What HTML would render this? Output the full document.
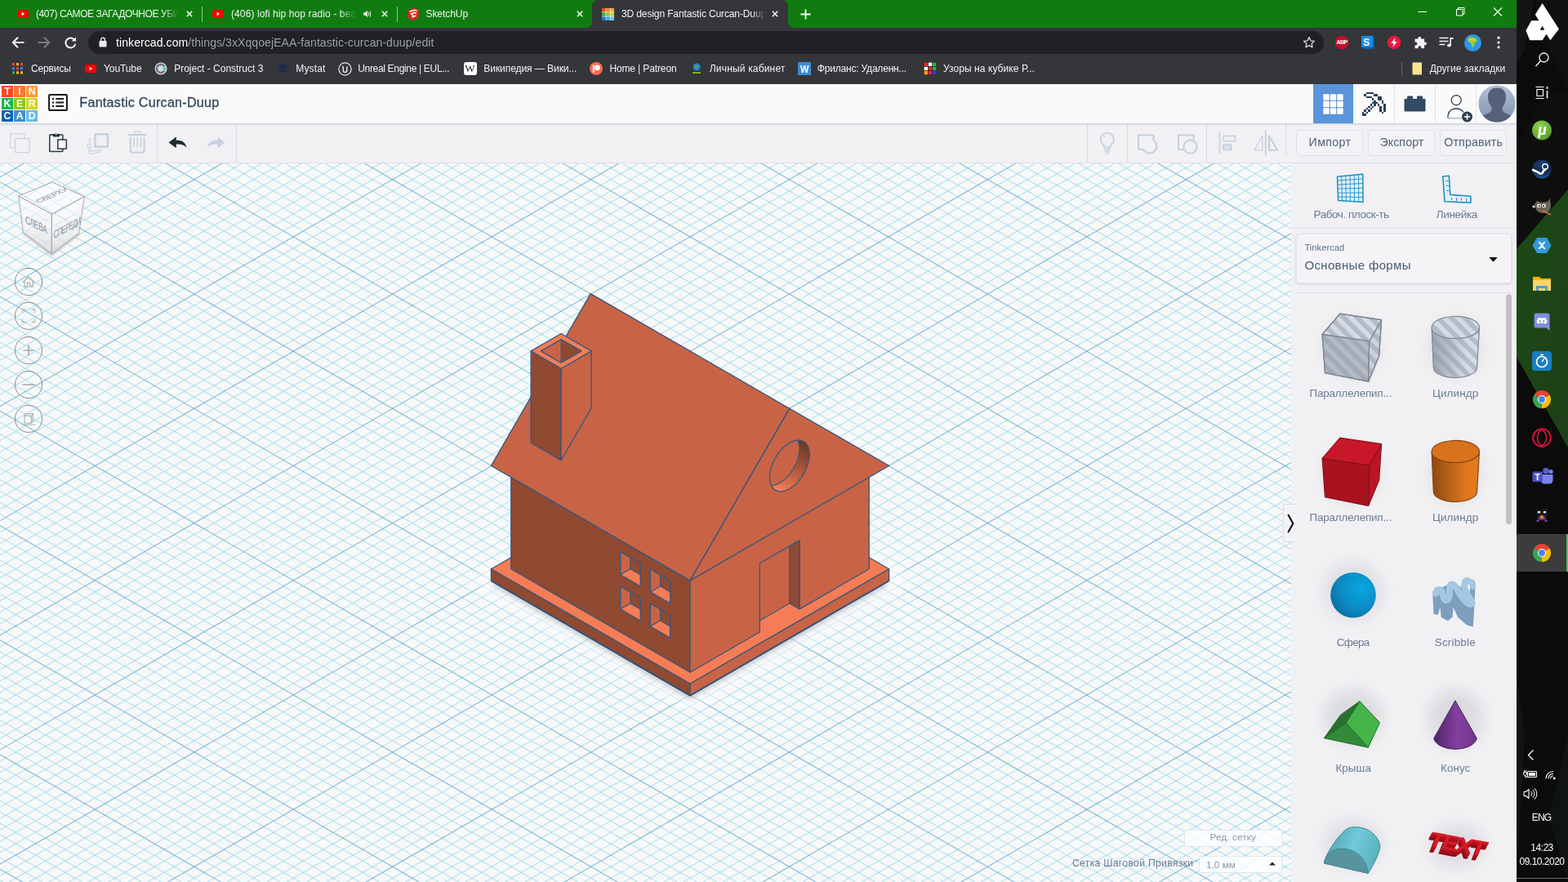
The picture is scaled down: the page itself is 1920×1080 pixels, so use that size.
<!DOCTYPE html>
<html lang="ru">
<head>
<meta charset="utf-8">
<title>3D design Fantastic Curcan-Duup | Tinkercad</title>
<style>
*{box-sizing:border-box;margin:0;padding:0}
html,body{width:1920px;height:1080px;overflow:hidden;background:#0b0b0b}
body{font-family:"Liberation Sans",sans-serif;-webkit-font-smoothing:antialiased}
#screen{position:relative;width:1920px;height:1080px;overflow:hidden}
.t{position:absolute;white-space:nowrap;line-height:0}
#browser,#workspace,#taskbar{will-change:transform}
.abs{position:absolute}
svg{position:absolute;display:block;overflow:visible}
#workspace{position:absolute;left:0;top:103px;width:1857px;height:977px;background:#f0f0f3;overflow:hidden}
#canvas{position:absolute;left:0;top:97px;width:1581px;height:880px;overflow:hidden;background:#f8f8f8}
#canvas svg.cv{left:0;top:0}

</style>
</head>
<body>
<div id="screen">
<header id="browser" class="abs" style="left:0;top:0;width:1857px;height:103px;background:#35363a;overflow:hidden">
<div class="abs" style="left:0;top:0;width:1857px;height:34px;background:#107c10"></div>
<svg class="abs" style="left:717px;top:0" width="256" height="34" viewBox="0 0 256 34"><path d="M0 34 C5 34 8 31 8 26 V8 C8 3.5 11.5 0 16 0 H240 C244.5 0 248 3.5 248 8 V26 C248 31 251 34 256 34 Z" fill="#35363a"/></svg>
<svg class="abs" style="left:21px;top:12px" width="14" height="10" viewBox="0 0 14 10"><rect width="14" height="10" rx="2.6" fill="#ff0000"/><path d="M5.6 2.8L9.2 5 5.6 7.2z" fill="#fff"/></svg>
<span class="t" style="left:44.00px;top:17.14px;font-size:12.00px;color:#f1f3f4;letter-spacing:-0.401px;width:175px;overflow:hidden;height:20px;line-height:0;-webkit-mask-image:linear-gradient(90deg,#000 155px,transparent 175px);padding-top:10px;margin-top:-10px;">(407) САМОЕ ЗАГАДОЧНОЕ УБИ</span>
<svg class="abs" style="left:228px;top:13px" width="8" height="8" viewBox="0 0 10 10"><path d="M1 1L9 9M9 1L1 9" stroke="#f1f3f4" stroke-width="2" fill="none"/></svg>
<div class="abs" style="left:247px;top:8px;width:1px;height:19px;background:#8fc48f"></div>
<svg class="abs" style="left:260px;top:12px" width="14" height="10" viewBox="0 0 14 10"><rect width="14" height="10" rx="2.6" fill="#ff0000"/><path d="M5.6 2.8L9.2 5 5.6 7.2z" fill="#fff"/></svg>
<span class="t" style="left:283.00px;top:17.14px;font-size:12.00px;color:#f1f3f4;letter-spacing:0.097px;width:153px;overflow:hidden;height:20px;-webkit-mask-image:linear-gradient(90deg,#000 133px,transparent 153px);padding-top:10px;margin-top:-10px;">(406) lofi hip hop radio - bea</span>
<svg class="abs" style="left:444px;top:11px" width="12" height="12" viewBox="0 0 12 12"><path d="M1 4.3h2.2L6 1.8v8.4L3.2 7.7H1z" fill="#dfe6df"/><path d="M7.6 3.6v4.8M9.4 2.4v7.2" stroke="#dfe6df" stroke-width="1" fill="none"/></svg>
<svg class="abs" style="left:466.7px;top:13px" width="8" height="8" viewBox="0 0 10 10"><path d="M1 1L9 9M9 1L1 9" stroke="#f1f3f4" stroke-width="2" fill="none"/></svg>
<div class="abs" style="left:486px;top:8px;width:1px;height:19px;background:#8fc48f"></div>
<svg class="abs" style="left:498px;top:9px" width="16" height="17" viewBox="0 0 16 17"><path d="M1.5 3.5L9.5 0.8 15 3.2 14.2 12.5 7 16.2 2 13z" fill="#e2231a"/><path d="M3.5 5.2L9.6 3.4 12.6 4.6M4.5 8.2L9.8 6.6 12 7.6M7 8.5L7.4 11.6 11.5 10" stroke="#fff" stroke-width="1.5" fill="none"/></svg>
<span class="t" style="left:521.50px;top:17.14px;font-size:12.00px;color:#f1f3f4;letter-spacing:-0.066px;">SketchUp</span>
<svg class="abs" style="left:706px;top:13px" width="8" height="8" viewBox="0 0 10 10"><path d="M1 1L9 9M9 1L1 9" stroke="#f1f3f4" stroke-width="2" fill="none"/></svg>
<svg class="abs" style="left:737px;top:9.5px" width="15" height="15" viewBox="0 0 15 15"><rect width="15" height="15" fill="#fff"/><rect x="0" y="0" width="4.6" height="4.6" fill="#f04e23"/><rect x="5.2" y="0" width="4.6" height="4.6" fill="#f7822f"/><rect x="10.4" y="0" width="4.6" height="4.6" fill="#f9a13a"/><rect x="0" y="5.2" width="4.6" height="4.6" fill="#3fae49"/><rect x="5.2" y="5.2" width="4.6" height="4.6" fill="#8cc63f"/><rect x="10.4" y="5.2" width="4.6" height="4.6" fill="#c4cf3a"/><rect x="0" y="10.4" width="4.6" height="4.6" fill="#1b75bc"/><rect x="5.2" y="10.4" width="4.6" height="4.6" fill="#3ea3dc"/><rect x="10.4" y="10.4" width="4.6" height="4.6" fill="#6ebfe8"/></svg>
<span class="t" style="left:761.00px;top:17.14px;font-size:12.00px;color:#f1f3f4;letter-spacing:-0.121px;width:176px;overflow:hidden;height:20px;-webkit-mask-image:linear-gradient(90deg,#000 160px,transparent 176px);padding-top:10px;margin-top:-10px;">3D design Fantastic Curcan-Duup</span>
<svg class="abs" style="left:944.7px;top:13px" width="8" height="8" viewBox="0 0 10 10"><path d="M1 1L9 9M9 1L1 9" stroke="#f1f3f4" stroke-width="2" fill="none"/></svg>
<svg class="abs" style="left:980px;top:10.5px" width="13" height="13" viewBox="0 0 13 13"><path d="M6.5 0.5v12M0.5 6.5h12" stroke="#fff" stroke-width="1.8" fill="none"/></svg>
<svg class="abs" style="left:1736px;top:8px" width="105" height="13" viewBox="0 0 105 13"><path d="M0.5 6.5H11" stroke="#fff" stroke-width="1" fill="none"/><path d="M47.5 3.5h7.5v7.5h-7.5z M49.5 3.5v-2h7.5v7.5h-2" stroke="#fff" stroke-width="1" fill="none"/><path d="M93 1.5L103 11.5M103 1.5L93 11.5" stroke="#fff" stroke-width="1.1" fill="none"/></svg>
<svg class="abs" style="left:14px;top:44px" width="82" height="16" viewBox="0 0 82 16"><path d="M15.5 8H2M8 1.8L1.8 8 8 14.2" stroke="#f1f3f4" stroke-width="2" fill="none"/><path d="M32.5 8H46M40 1.8L46.2 8 40 14.2" stroke="#7b7d82" stroke-width="2" fill="none"/><path d="M77.5 5.2A6 6 0 1 0 78.3 9.6" stroke="#f1f3f4" stroke-width="2" fill="none"/><path d="M79 1.2v5.3h-5.3z" fill="#f1f3f4"/></svg>
<div class="abs" style="left:108px;top:38px;width:1513px;height:28px;border-radius:14px;background:#202124"></div>
<svg class="abs" style="left:121px;top:45px" width="10" height="13" viewBox="0 0 10 13"><rect x="0.5" y="5" width="9" height="7.5" rx="1" fill="#e8eaed"/><path d="M2.6 5.2V3.6a2.4 2.4 0 0 1 4.8 0v1.6" stroke="#e8eaed" stroke-width="1.4" fill="none"/></svg>
<span class="t" style="left:142px;top:51.95px;font-size:14px;letter-spacing:0.086px;color:#fff">tinkercad.com<span style="color:#9aa0a6">/things/3xXqqoejEAA-fantastic-curcan-duup/edit</span></span>
<svg class="abs" style="left:1594.5px;top:44px" width="16" height="16" viewBox="0 0 16 16"><path d="M8 1.6l1.95 4.2 4.55.5-3.4 3.1.95 4.5L8 11.6l-4.05 2.3.95-4.5-3.4-3.1 4.55-.5z" stroke="#d5d7da" stroke-width="1.3" fill="none" stroke-linejoin="round"/></svg>
<svg class="abs" style="left:1634px;top:43px" width="18" height="18" viewBox="0 0 18 18"><path d="M5.6 1h6.8L17 5.6v6.8L12.4 17H5.6L1 12.4V5.6z" fill="#c70d2c"/></svg>
<span class="t" style="left:1636.25px;top:52.40px;font-size:7.50px;color:#fff;letter-spacing:-0.779px;font-weight:bold;">ABP</span>
<svg class="abs" style="left:1666px;top:43px" width="18" height="18" viewBox="0 0 18 18"><path d="M1 1h14l2 2.5V17H3.5L1 14.5z" fill="#0b5cad"/><rect x="1" y="1" width="14" height="13.5" fill="#1a8fe3"/></svg>
<span class="t" style="left:1669.30px;top:51.84px;font-size:12.00px;color:#fff;font-weight:bold;">S</span>
<svg class="abs" style="left:1698px;top:43px" width="18" height="18" viewBox="0 0 18 18"><circle cx="9" cy="9" r="8.3" fill="#e8173d"/><path d="M10.6 3.2L5.2 9.8h3.2L7.2 14.8l5.6-6.8H9.5z" fill="#fff"/></svg>
<svg class="abs" style="left:1730px;top:43.5px" width="17" height="17" viewBox="0 0 17 17"><path d="M6.5 2.6a1.8 1.8 0 0 1 3.6 0V3.6h3.2a.8.8 0 0 1 .8.8v3h1a1.9 1.9 0 0 1 0 3.8h-1v3.2a.8.8 0 0 1-.8.8h-3v-1a1.9 1.9 0 0 0-3.8 0v1h-3.2a.8.8 0 0 1-.8-.8v-3h1a1.9 1.9 0 0 0 0-3.8h-1V4.4a.8.8 0 0 1 .8-.8h3.2z" fill="#f1f3f4"/></svg>
<svg class="abs" style="left:1762px;top:44px" width="18" height="16" viewBox="0 0 18 16"><path d="M0.5 2.5h11M0.5 6.5h11M0.5 10.5h7" stroke="#f1f3f4" stroke-width="1.7" fill="none"/><path d="M14.2 2v9.2" stroke="#f1f3f4" stroke-width="1.6"/><ellipse cx="12.4" cy="11.6" rx="2.4" ry="2" fill="#f1f3f4"/><path d="M14.2 2h3.3v2h-3.3z" fill="#f1f3f4"/></svg>
<svg class="abs" style="left:1792.5px;top:41.5px" width="21" height="21" viewBox="0 0 21 21"><circle cx="10.5" cy="10.5" r="10.5" fill="#2b96e8"/><path d="M5 4.5c2-1 5-1.5 7.5-.5 2 1 3.500 2 3.500 4.500-1 1-2 1.500-3 1-.500 2-.5 4-2 6-1.500 1-2.500-1.500-2.500-3.500 0-1.500-1.500-2-3-2.500C3.500 8 4 6 5 4.500z" fill="#9ccc3c"/><path d="M6 6.500c2-.5 5 0 7 1" stroke="#f2d33c" stroke-width="1.300" fill="none"/></svg>
<svg class="abs" style="left:1833px;top:44px" width="4" height="16" viewBox="0 0 4 16"><circle cx="2" cy="2.2" r="1.600" fill="#f1f3f4"/><circle cx="2" cy="8" r="1.600" fill="#f1f3f4"/><circle cx="2" cy="13.800" r="1.600" fill="#f1f3f4"/></svg>
<svg class="abs" style="left:15px;top:77px" width="13" height="14" viewBox="0 0 13 14"><rect x="0" y="0" width="3" height="3.300" fill="#e8453c"/><rect x="5" y="0" width="3" height="3.300" fill="#f2b31b"/><rect x="10" y="0" width="3" height="3.300" fill="#e8453c"/><rect x="0" y="5.2" width="3" height="3.300" fill="#3b7ded"/><rect x="5" y="5.2" width="3" height="3.300" fill="#e8453c"/><rect x="10" y="5.2" width="3" height="3.300" fill="#3b7ded"/><rect x="0" y="10.4" width="3" height="3.300" fill="#31a952"/><rect x="5" y="10.4" width="3" height="3.300" fill="#f2b31b"/><rect x="10" y="10.4" width="3" height="3.300" fill="#f2b31b"/></svg>
<span class="t" style="left:38.00px;top:83.84px;font-size:12.00px;color:#f1f3f4;letter-spacing:-0.131px;">Сервисы</span>
<span class="t" style="left:127.00px;top:83.84px;font-size:12.00px;color:#f1f3f4;letter-spacing:-0.094px;">YouTube</span>
<span class="t" style="left:213.20px;top:83.84px;font-size:12.00px;color:#f1f3f4;letter-spacing:-0.013px;">Project - Construct 3</span>
<span class="t" style="left:362.30px;top:83.84px;font-size:12.00px;color:#f1f3f4;letter-spacing:0.144px;">Mystat</span>
<span class="t" style="left:438.20px;top:83.84px;font-size:12.00px;color:#f1f3f4;letter-spacing:-0.322px;">Unreal Engine | EUL...</span>
<span class="t" style="left:592.30px;top:83.84px;font-size:12.00px;color:#f1f3f4;letter-spacing:-0.058px;">Википедия — Вики...</span>
<span class="t" style="left:746.40px;top:83.84px;font-size:12.00px;color:#f1f3f4;letter-spacing:-0.123px;">Home | Patreon</span>
<span class="t" style="left:868.80px;top:83.84px;font-size:12.00px;color:#f1f3f4;letter-spacing:0.173px;">Личный кабинет</span>
<span class="t" style="left:1000.80px;top:83.84px;font-size:12.00px;color:#f1f3f4;letter-spacing:-0.188px;">Фриланс: Удаленн...</span>
<span class="t" style="left:1155.00px;top:83.84px;font-size:12.00px;color:#f1f3f4;letter-spacing:0.076px;">Узоры на кубике Р...</span>
<span class="t" style="left:1750.80px;top:83.84px;font-size:12.00px;color:#f1f3f4;letter-spacing:0.037px;">Другие закладки</span>
<svg class="abs" style="left:104px;top:79px" width="14" height="10" viewBox="0 0 14 10"><rect width="14" height="10" rx="2.6" fill="#ff0000"/><path d="M5.6 2.8L9.2 5 5.6 7.2z" fill="#fff"/></svg>
<svg class="abs" style="left:189px;top:76px" width="16" height="16" viewBox="0 0 16 16"><circle cx="8" cy="8" r="7.500" fill="#d9dde2"/><path d="M12.200 5.500A5 5 0 1 0 12.200 10.500" stroke="#6b7783" stroke-width="2.600" fill="none"/><path d="M9.500 8l4.500-2.500v5z" fill="#2fd1b5"/></svg>
<svg class="abs" style="left:338px;top:77px" width="16" height="14" viewBox="0 0 16 14"><path d="M8 1L15.500 4.800 8 8.600 0.500 4.800z" fill="#1f2b4d"/><path d="M3.500 7v3.500c2.500 2 6.500 2 9 0V7L8 9.300z" fill="#1f2b4d"/></svg>
<svg class="abs" style="left:413.500px;top:75.500px" width="17" height="17" viewBox="0 0 17 17"><circle cx="8.500" cy="8.500" r="7.600" stroke="#e8eaed" stroke-width="1.200" fill="none"/><path d="M5.200 5.200c.9.300 1.100.8 1.100 1.600v3.400c0 1.500 1.100 2.300 2.300 2.300s2.200-.8 2.200-2.300V5.600" stroke="#e8eaed" stroke-width="1.500" fill="none"/></svg>
<div class="abs" style="left:568px;top:76px;width:16px;height:16px;border-radius:3px;background:#fff"></div>
<span class="t" style="left:569.2px;top:84.10px;font-size:13px;color:#222;font-family:'Liberation Serif',serif;letter-spacing:-0.500px">W</span>
<svg class="abs" style="left:722px;top:76px" width="16" height="16" viewBox="0 0 16 16"><circle cx="8" cy="8" r="8" fill="#f96854"/><circle cx="9.300" cy="6.800" r="3.400" fill="#fff"/><rect x="3.800" y="3.400" width="1.800" height="9.400" fill="#fff"/></svg>
<svg class="abs" style="left:845px;top:75.500px" width="16" height="17" viewBox="0 0 16 17"><circle cx="8.200" cy="6" r="4.600" fill="#2a7fd0"/><path d="M5 5c1.500-1.500 4-1.500 5.500 0-1 1.500-1 2.500-2.500 3-1.500-.500-2.500-1.500-3-3z" fill="#3cb34a"/><rect x="2" y="11.500" width="12" height="3.600" fill="#1d3f1d"/><rect x="3" y="12.500" width="10" height="1.400" fill="#c9d13a"/></svg>
<div class="abs" style="left:977px;top:76px;width:16px;height:16px;background:#3f8ad0"></div>
<span class="t" style="left:978.87px;top:84.70px;font-size:13.00px;color:#fff;font-weight:bold;transform:scaleX(0.85);">W</span>
<svg class="abs" style="left:1131px;top:76px" width="16" height="16" viewBox="0 0 16 16"><rect width="16" height="16" fill="#222"/><rect x="0.6" y="0.6" width="4.400" height="4.400" fill="#e8272b"/><rect x="5.8" y="0.6" width="4.400" height="4.400" fill="#fff"/><rect x="11" y="0.6" width="4.400" height="4.400" fill="#2fb344"/><rect x="0.6" y="5.8" width="4.400" height="4.400" fill="#fff"/><rect x="5.8" y="5.8" width="4.400" height="4.400" fill="#e8272b"/><rect x="11" y="5.8" width="4.400" height="4.400" fill="#2fb344"/><rect x="0.6" y="11" width="4.400" height="4.400" fill="#f2a516"/><rect x="5.8" y="11" width="4.400" height="4.400" fill="#e8272b"/><rect x="11" y="11" width="4.400" height="4.400" fill="#2340e0"/></svg>
<div class="abs" style="left:1716px;top:76px;width:1px;height:16px;background:#5f6368"></div>
<svg class="abs" style="left:1728.500px;top:76px" width="13" height="16" viewBox="0 0 13 16"><path d="M0.500 1.500a1 1 0 0 1 1-1h9.500a1 1 0 0 1 1 1v13a1 1 0 0 1-1 1H1.500a1 1 0 0 1-1-1z" fill="#fde293"/><path d="M9.500 15.500v-3h3z" fill="#f4c34a"/></svg>
</header>
<main id="workspace">
<div id="tk-header" class="abs" style="left:0;top:0;width:1857px;height:48px;background:#fafafa;box-shadow:0 1px 2px rgba(120,135,160,.42);z-index:3">
<div class="abs" style="left:2.10px;top:2.20px;width:13.7px;height:13.7px;background:#fb4522"></div>
<span class="t" style="left:5.27px;top:9.17px;font-size:12.20px;color:#fff;font-weight:bold;">T</span>
<div class="abs" style="left:17.15px;top:2.20px;width:13.7px;height:13.7px;background:#fd7531"></div>
<span class="t" style="left:22.36px;top:9.17px;font-size:12.20px;color:#fff;font-weight:bold;">I</span>
<div class="abs" style="left:32.20px;top:2.20px;width:13.7px;height:13.7px;background:#fe9a33"></div>
<span class="t" style="left:34.69px;top:9.17px;font-size:12.20px;color:#fff;font-weight:bold;">N</span>
<div class="abs" style="left:2.10px;top:17.25px;width:13.7px;height:13.7px;background:#20b254"></div>
<span class="t" style="left:4.59px;top:24.22px;font-size:12.20px;color:#fff;font-weight:bold;">K</span>
<div class="abs" style="left:17.15px;top:17.25px;width:13.7px;height:13.7px;background:#8ac906"></div>
<span class="t" style="left:19.98px;top:24.22px;font-size:12.20px;color:#fff;font-weight:bold;">E</span>
<div class="abs" style="left:32.20px;top:17.25px;width:13.7px;height:13.7px;background:#d2d228"></div>
<span class="t" style="left:34.69px;top:24.22px;font-size:12.20px;color:#fff;font-weight:bold;">R</span>
<div class="abs" style="left:2.10px;top:32.30px;width:13.7px;height:13.7px;background:#0461b2"></div>
<span class="t" style="left:4.59px;top:39.27px;font-size:12.20px;color:#fff;font-weight:bold;">C</span>
<div class="abs" style="left:17.15px;top:32.30px;width:13.7px;height:13.7px;background:#3d90d0"></div>
<span class="t" style="left:19.64px;top:39.27px;font-size:12.20px;color:#fff;font-weight:bold;">A</span>
<div class="abs" style="left:32.20px;top:32.30px;width:13.7px;height:13.7px;background:#6bb8e1"></div>
<span class="t" style="left:34.69px;top:39.27px;font-size:12.20px;color:#fff;font-weight:bold;">D</span>
<svg class="abs" style="left:59px;top:12px" width="24" height="21" viewBox="0 0 24 21"><rect x="1.1" y="1.1" width="21.8" height="18.8" rx="1" fill="#fff" stroke="#151515" stroke-width="2"/><path d="M4.8 6h2.4M4.8 10.5h2.4M4.8 15h2.4M9.300 6h9.800M9.300 10.500h9.800M9.300 15h9.800" stroke="#1c1c1c" stroke-width="2.200" fill="none"/></svg>
<span class="t" style="left:97.30px;top:22.42px;font-size:16.10px;color:#33465c;letter-spacing:0.274px;-webkit-text-stroke:0.3px #33465c;">Fantastic Curcan-Duup</span>
<div class="abs" style="left:1608px;top:0;width:49px;height:48px;background:#5b94da"></div>
<svg class="abs" style="left:1620px;top:12px" width="25" height="25" viewBox="0 0 25 25"><rect x="0.3" y="0.3" width="7.400" height="7.400" rx="0.800" fill="#fff"/><rect x="8.8" y="0.3" width="7.400" height="7.400" rx="0.800" fill="#fff"/><rect x="17.3" y="0.3" width="7.400" height="7.400" rx="0.800" fill="#fff"/><rect x="0.3" y="8.8" width="7.400" height="7.400" rx="0.800" fill="#fff"/><rect x="8.8" y="8.8" width="7.400" height="7.400" rx="0.800" fill="#fff"/><rect x="17.3" y="8.8" width="7.400" height="7.400" rx="0.800" fill="#fff"/><rect x="0.3" y="17.3" width="7.400" height="7.400" rx="0.800" fill="#fff"/><rect x="8.8" y="17.3" width="7.400" height="7.400" rx="0.800" fill="#fff"/><rect x="17.3" y="17.3" width="7.400" height="7.400" rx="0.800" fill="#fff"/></svg>
<div class="abs" style="left:1707px;top:0;width:1px;height:48px;background:#dfe4ea"></div>
<div class="abs" style="left:1757px;top:0;width:1px;height:48px;background:#dfe4ea"></div>
<div class="abs" style="left:1807px;top:0;width:1px;height:48px;background:#dfe4ea"></div>
<svg class="abs" style="left:1668.300px;top:9.500px" width="30" height="30" viewBox="0 0 30 30" shape-rendering="crispEdges"><rect x="4.75" y="0.00" width="9.50" height="2.38" fill="#2a3f5a"/><rect x="2.38" y="2.38" width="2.38" height="2.38" fill="#2a3f5a"/><rect x="14.25" y="2.38" width="4.75" height="2.38" fill="#2a3f5a"/><rect x="4.75" y="4.75" width="7.12" height="2.38" fill="#2a3f5a"/><rect x="19.00" y="4.75" width="4.75" height="2.38" fill="#2a3f5a"/><rect x="11.88" y="7.12" width="2.38" height="2.38" fill="#2a3f5a"/><rect x="19.00" y="7.12" width="4.75" height="2.38" fill="#2a3f5a"/><rect x="14.25" y="9.50" width="2.38" height="2.38" fill="#2a3f5a"/><rect x="23.75" y="9.50" width="2.38" height="2.38" fill="#2a3f5a"/><rect x="11.88" y="11.88" width="7.12" height="2.38" fill="#2a3f5a"/><rect x="23.75" y="11.88" width="2.38" height="2.38" fill="#2a3f5a"/><rect x="9.50" y="14.25" width="2.38" height="2.38" fill="#2a3f5a"/><rect x="14.25" y="14.25" width="2.38" height="2.38" fill="#2a3f5a"/><rect x="19.00" y="14.25" width="2.38" height="2.38" fill="#2a3f5a"/><rect x="26.12" y="14.25" width="2.38" height="2.38" fill="#2a3f5a"/><rect x="7.12" y="16.62" width="2.38" height="2.38" fill="#2a3f5a"/><rect x="11.88" y="16.62" width="2.38" height="2.38" fill="#2a3f5a"/><rect x="21.38" y="16.62" width="2.38" height="2.38" fill="#2a3f5a"/><rect x="26.12" y="16.62" width="2.38" height="2.38" fill="#2a3f5a"/><rect x="4.75" y="19.00" width="2.38" height="2.38" fill="#2a3f5a"/><rect x="9.50" y="19.00" width="2.38" height="2.38" fill="#2a3f5a"/><rect x="21.38" y="19.00" width="2.38" height="2.38" fill="#2a3f5a"/><rect x="26.12" y="19.00" width="2.38" height="2.38" fill="#2a3f5a"/><rect x="2.38" y="21.38" width="2.38" height="2.38" fill="#2a3f5a"/><rect x="7.12" y="21.38" width="2.38" height="2.38" fill="#2a3f5a"/><rect x="21.38" y="21.38" width="2.38" height="2.38" fill="#2a3f5a"/><rect x="26.12" y="21.38" width="2.38" height="2.38" fill="#2a3f5a"/><rect x="0.00" y="23.75" width="2.38" height="2.38" fill="#2a3f5a"/><rect x="4.75" y="23.75" width="2.38" height="2.38" fill="#2a3f5a"/><rect x="23.75" y="23.75" width="2.38" height="2.38" fill="#2a3f5a"/><rect x="0.00" y="26.12" width="4.75" height="2.38" fill="#2a3f5a"/></svg>
<svg class="abs" style="left:1719px;top:14px" width="27" height="20" viewBox="0 0 27 20"><path d="M0.500 5a1 1 0 0 1 1-1h2.500V1.500a1 1 0 0 1 1-1h5a1 1 0 0 1 1 1V4h5V1.500a1 1 0 0 1 1-1h5a1 1 0 0 1 1 1V4h2.500a1 1 0 0 1 1 1v13.500a1 1 0 0 1-1 1h-24a1 1 0 0 1-1-1z" fill="#324a63"/></svg>
<svg class="abs" style="left:1771px;top:10px" width="34" height="36" viewBox="0 0 34 36"><circle cx="12.200" cy="9.600" r="6" stroke="#2c3e50" stroke-width="1.300" fill="none"/><path d="M1.800 31.500c0-8 4.500-11.500 10.400-11.500 4 0 7 1.500 8.800 4.500" stroke="#2c3e50" stroke-width="1.300" fill="none"/><path d="M1.800 31.800h17" stroke="#9fb0c3" stroke-width="1.300"/><circle cx="25.500" cy="30" r="6.500" fill="#2c3e50"/><path d="M25.500 26.200v7.600M21.700 30h7.600" stroke="#fff" stroke-width="1.500"/></svg>
<svg class="abs" style="left:1810px;top:0.500px" width="46" height="46" viewBox="0 0 46 46"><defs><linearGradient id="avg" x1="0" y1="0" x2="0" y2="1"><stop offset="0" stop-color="#b3c1d6"/><stop offset="1" stop-color="#7f91ae"/></linearGradient><clipPath id="avc"><circle cx="23" cy="23" r="22.600"/></clipPath></defs><circle cx="23" cy="23" r="22.600" fill="url(#avg)"/><g clip-path="url(#avc)" fill="#556179"><path d="M23 3.500c-7 0-11.500 4.500-11 12 .300 5 2 9 4.500 12 .500 3-.5 5-3 6.500-4 2-8.500 3.500-10.500 6V46h40v-6c-2-2.500-6.500-4-10.500-6-2.500-1.500-3.500-3.500-3-6.500 2.500-3 4.200-7 4.500-12 .5-7.500-4-12-11-12z"/></g></svg>
</div>
<div id="tk-toolbar" class="abs" style="left:0;top:48px;width:1857px;height:49px;background:#f1f1f4;border-bottom:1px solid #dcdfe6;z-index:2">
<svg class="abs" style="left:10.5px;top:10.5px" width="26" height="26" viewBox="0 0 26 26"><rect x="1.600" y="1.800" width="17.200" height="17" fill="none" stroke="#c6d1dd" stroke-width="1.100"/><rect x="7.700" y="7.700" width="17.200" height="17" fill="#f1f1f4" stroke="#c6d1dd" stroke-width="1.100"/></svg>
<svg class="abs" style="left:58.500px;top:9.200px" width="24" height="28" viewBox="0 0 24 28"><rect x="1.800" y="5" width="16" height="20.500" rx="0.600" fill="none" stroke="#2b3a3f" stroke-width="1.500"/><path d="M5 4.200h3a2 2 0 0 1 3.600 0h3l-1.200 3.400H6.200z" fill="#1f2a2e"/><circle cx="9.800" cy="4.300" r="1" fill="#f1f1f4"/><rect x="11.800" y="10.900" width="10.600" height="11.400" rx="0.600" fill="#f6f6f8" stroke="#2b3a3f" stroke-width="1.500"/></svg>
<svg class="abs" style="left:106px;top:11.200px" width="28" height="28" viewBox="0 0 28 28"><path d="M2.600 14.500l-1.400.4 2.500 12 13.500-3 " fill="none" stroke="#c6d1dd" stroke-width="1"/><path d="M5.200 7.500l-1.700.3 1.600 15.300 14-1.600.1-1.500" fill="#f1f1f4" stroke="#c6d1dd" stroke-width="1.200"/><rect x="10.500" y="2.300" width="15.400" height="15.300" fill="#f1f1f4" stroke="#c6d1dd" stroke-width="2.400"/></svg>
<svg class="abs" style="left:156px;top:8.200px" width="24" height="30" viewBox="0 0 24 31"><path d="M1.400 6.300h21.500" stroke="#c6d1dd" stroke-width="2.200" stroke-linecap="round"/><path d="M8.500 5.600V4a2 2 0 0 1 2-2h3.400a2 2 0 0 1 2 2v1.600" stroke="#c6d1dd" stroke-width="1.300" fill="none"/><path d="M3.500 9.200v16.300a3.200 3.200 0 0 0 3.200 3.200h11a3.200 3.200 0 0 0 3.200-3.200V9.200" stroke="#c6d1dd" stroke-width="2.100" fill="none"/><path d="M7.800 9.800v12M12.200 9.800v12M16.600 9.800v12" stroke="#c6d1dd" stroke-width="1.500"/></svg>
<div class="abs" style="left:192.2px;top:0;width:1px;height:48px;background:#d3dae3"></div>
<svg class="abs" style="left:205.800px;top:16.200px" width="23.200" height="14.800" viewBox="0 0 22 14"><path d="M0.500 7L9.300 0.500V4.600C15.500 4.400 20 6.500 21.300 13.200 18.500 9.800 14.500 8.800 9.300 9.100V13.500z" fill="#1f2c2e"/></svg>
<svg class="abs" style="left:253.400px;top:16.200px" width="23.200" height="14.800" viewBox="0 0 22 14"><path transform="translate(22,0) scale(-1,1)" d="M0.500 7L9.300 0.500V4.600C15.500 4.400 20 6.500 21.300 13.200 18.500 9.800 14.500 8.800 9.300 9.100V13.500z" fill="#c6d1dd"/></svg>
<div class="abs" style="left:289.2px;top:0;width:1px;height:48px;background:#d3dae3"></div>
<div class="abs" style="left:1331.2px;top:0;width:1px;height:48px;background:#d3dae3"></div>
<div class="abs" style="left:1380.2px;top:0;width:1px;height:48px;background:#d3dae3"></div>
<div class="abs" style="left:1477.3px;top:0;width:1px;height:48px;background:#d3dae3"></div>
<div class="abs" style="left:1574.3px;top:0;width:1px;height:39px;background:#d3dae3"></div>
<svg class="abs" style="left:1346px;top:10px" width="20" height="30" viewBox="0 0 20 30"><path d="M6.200 19.500c0-3-4.400-5-4.400-9.800a8 8 0 0 1 16 0c0 4.800-4.400 6.800-4.400 9.800z" fill="none" stroke="#c6d1dd" stroke-width="1.900"/><path d="M6 22h8M6.500 24.500h7M7.800 27h4.400" stroke="#c6d1dd" stroke-width="1.400"/><path d="M5.500 8a4.500 4.500 0 0 1 2.500-3" stroke="#c6d1dd" stroke-width="1" fill="none"/></svg>
<svg class="abs" style="left:1392px;top:11.800px" width="27" height="27" viewBox="0 0 27 27"><path d="M2 2.500h18.500v6.300a8.600 8.600 0 1 1-12.300 11.200H2z" fill="none" stroke="#c6d1dd" stroke-width="2.100" stroke-linejoin="round"/></svg>
<svg class="abs" style="left:1441px;top:11.800px" width="27" height="27" viewBox="0 0 27 27"><rect x="2" y="2.500" width="18.500" height="17.500" fill="none" stroke="#c6d1dd" stroke-width="2"/><circle cx="16.500" cy="16.800" r="8.200" fill="#f1f1f4" stroke="#c6d1dd" stroke-width="2.100"/></svg>
<svg class="abs" style="left:1491px;top:10.200px" width="24" height="28" viewBox="0 0 24 28"><path d="M2.500 1v26" stroke="#c6d1dd" stroke-width="1.600"/><rect x="7" y="5.500" width="14.500" height="6.300" fill="none" stroke="#c6d1dd" stroke-width="1.500"/><rect x="7" y="16.200" width="9.500" height="6.300" fill="#dde3ea" stroke="#c6d1dd" stroke-width="1.800"/></svg>
<svg class="abs" style="left:1534px;top:8.300px" width="32" height="32" viewBox="0 0 32 32"><path d="M15.800 0.500v31" stroke="#c6d1dd" stroke-width="1.800"/><path d="M11.800 7.500v17.500H1.600z" fill="none" stroke="#c6d1dd" stroke-width="1.200" stroke-linejoin="round"/><path d="M20 7.500v17.500h10.200z" fill="none" stroke="#c6d1dd" stroke-width="2.200" stroke-linejoin="round"/></svg>
<div class="abs" style="left:1587.0px;top:8.0px;width:82.0px;height:32px;border:1px solid #dde2e9;border-radius:4px;background:#f3f3f6"></div>
<span class="t" style="left:1602.60px;top:23.38px;font-size:14.20px;color:#516178;letter-spacing:0.376px;">Импорт</span>
<div class="abs" style="left:1675.0px;top:8.0px;width:82.0px;height:32px;border:1px solid #dde2e9;border-radius:4px;background:#f3f3f6"></div>
<span class="t" style="left:1689.40px;top:23.38px;font-size:14.20px;color:#516178;letter-spacing:0.106px;">Экспорт</span>
<div class="abs" style="left:1763.0px;top:8.0px;width:82.0px;height:32px;border:1px solid #dde2e9;border-radius:4px;background:#f3f3f6"></div>
<span class="t" style="left:1768.20px;top:23.38px;font-size:14.20px;color:#516178;letter-spacing:0.165px;">Отправить</span>
</div>
<section id="canvas"><svg class="cv" width="1581" height="880" viewBox="0 0 1581 880">
<defs><filter id="blur" x="-20%" y="-20%" width="140%" height="140%"><feGaussianBlur stdDeviation="3.2"/></filter><filter id="blur2" x="-20%" y="-20%" width="140%" height="140%"><feGaussianBlur stdDeviation="7"/></filter><linearGradient id="holegrad" x1="0.7" y1="0" x2="0.3" y2="1"><stop offset="0" stop-color="#6f3826"/><stop offset="0.45" stop-color="#a9553a"/><stop offset="1" stop-color="#f67c55"/></linearGradient></defs>
<rect width="1581" height="880" fill="#f8f8f8"/>
<path d="M0.0 1783.9L1581.0 871.0M0.0 1769.9L1581.0 857.0M0.0 1755.9L1581.0 843.0M0.0 1741.8L1581.0 829.0M0.0 1727.8L1581.0 814.9M0.0 1713.8L1581.0 800.9M0.0 1685.7L1581.0 772.9M0.0 1671.7L1581.0 758.8M0.0 1657.7L1581.0 744.8M0.0 1643.7L1581.0 730.8M0.0 1629.6L1581.0 716.8M0.0 1615.6L1581.0 702.7M0.0 1601.6L1581.0 688.7M0.0 1587.6L1581.0 674.7M0.0 1573.6L1581.0 660.7M0.0 1545.5L1581.0 632.6M0.0 1531.5L1581.0 618.6M0.0 1517.5L1581.0 604.6M0.0 1503.4L1581.0 590.6M0.0 1489.4L1581.0 576.5M0.0 1475.4L1581.0 562.5M0.0 1461.4L1581.0 548.5M0.0 1447.3L1581.0 534.5M0.0 1433.3L1581.0 520.4M0.0 1405.3L1581.0 492.4M0.0 1391.2L1581.0 478.4M0.0 1377.2L1581.0 464.3M0.0 1363.2L1581.0 450.3M0.0 1349.2L1581.0 436.3M0.0 1335.1L1581.0 422.3M0.0 1321.1L1581.0 408.2M0.0 1307.1L1581.0 394.2M0.0 1293.1L1581.0 380.2M0.0 1265.0L1581.0 352.1M0.0 1251.0L1581.0 338.1M0.0 1237.0L1581.0 324.1M0.0 1223.0L1581.0 310.1M0.0 1208.9L1581.0 296.1M0.0 1194.9L1581.0 282.0M0.0 1180.9L1581.0 268.0M0.0 1166.9L1581.0 254.0M0.0 1152.8L1581.0 240.0M0.0 1124.8L1581.0 211.9M0.0 1110.8L1581.0 197.9M0.0 1096.7L1581.0 183.9M0.0 1082.7L1581.0 169.8M0.0 1068.7L1581.0 155.8M0.0 1054.7L1581.0 141.8M0.0 1040.6L1581.0 127.8M0.0 1026.6L1581.0 113.7M0.0 1012.6L1581.0 99.7M0.0 984.5L1581.0 71.7M0.0 970.5L1581.0 57.6M0.0 956.5L1581.0 43.6M0.0 942.5L1581.0 29.6M0.0 928.4L1581.0 15.6M0.0 914.4L1581.0 1.5M0.0 900.4L1581.0 -12.5M0.0 886.4L1581.0 -26.5M0.0 872.4L1581.0 -40.5M0.0 844.3L1581.0 -68.6M0.0 830.3L1581.0 -82.6M0.0 816.3L1581.0 -96.6M0.0 802.2L1581.0 -110.6M0.0 788.2L1581.0 -124.7M0.0 774.2L1581.0 -138.7M0.0 760.2L1581.0 -152.7M0.0 746.1L1581.0 -166.7M0.0 732.1L1581.0 -180.8M0.0 704.1L1581.0 -208.8M0.0 690.0L1581.0 -222.8M0.0 676.0L1581.0 -236.9M0.0 662.0L1581.0 -250.9M0.0 648.0L1581.0 -264.9M0.0 633.9L1581.0 -278.9M0.0 619.9L1581.0 -293.0M0.0 605.9L1581.0 -307.0M0.0 591.9L1581.0 -321.0M0.0 563.8L1581.0 -349.1M0.0 549.8L1581.0 -363.1M0.0 535.8L1581.0 -377.1M0.0 521.8L1581.0 -391.1M0.0 507.7L1581.0 -405.1M0.0 493.7L1581.0 -419.2M0.0 479.7L1581.0 -433.2M0.0 465.7L1581.0 -447.2M0.0 451.6L1581.0 -461.2M0.0 423.6L1581.0 -489.3M0.0 409.6L1581.0 -503.3M0.0 395.5L1581.0 -517.3M0.0 381.5L1581.0 -531.4M0.0 367.5L1581.0 -545.4M0.0 353.5L1581.0 -559.4M0.0 339.4L1581.0 -573.4M0.0 325.4L1581.0 -587.5M0.0 311.4L1581.0 -601.5M0.0 283.3L1581.0 -629.5M0.0 269.3L1581.0 -643.6M0.0 255.3L1581.0 -657.6M0.0 241.3L1581.0 -671.6M0.0 227.2L1581.0 -685.6M0.0 213.2L1581.0 -699.7M0.0 199.2L1581.0 -713.7M0.0 185.2L1581.0 -727.7M0.0 171.2L1581.0 -741.7M0.0 143.1L1581.0 -769.8M0.0 129.1L1581.0 -783.8M0.0 115.1L1581.0 -797.8M0.0 101.0L1581.0 -811.8M0.0 87.0L1581.0 -825.9M0.0 73.0L1581.0 -839.9M0.0 59.0L1581.0 -853.9M0.0 44.9L1581.0 -867.9M0.0 30.9L1581.0 -882.0M0.0 2.9L1581.0 -910.0" stroke="#90d5ec" stroke-opacity="0.6" stroke-width="1.25" fill="none"/>
<path d="M0.0 878.2L1581.0 1791.1M0.0 850.2L1581.0 1763.0M0.0 836.1L1581.0 1749.0M0.0 822.1L1581.0 1735.0M0.0 808.1L1581.0 1721.0M0.0 794.1L1581.0 1706.9M0.0 780.0L1581.0 1692.9M0.0 766.0L1581.0 1678.9M0.0 752.0L1581.0 1664.9M0.0 738.0L1581.0 1650.9M0.0 709.9L1581.0 1622.8M0.0 695.9L1581.0 1608.8M0.0 681.9L1581.0 1594.8M0.0 667.9L1581.0 1580.7M0.0 653.8L1581.0 1566.7M0.0 639.8L1581.0 1552.7M0.0 625.8L1581.0 1538.7M0.0 611.8L1581.0 1524.6M0.0 597.7L1581.0 1510.6M0.0 569.7L1581.0 1482.6M0.0 555.7L1581.0 1468.5M0.0 541.6L1581.0 1454.5M0.0 527.6L1581.0 1440.5M0.0 513.6L1581.0 1426.5M0.0 499.6L1581.0 1412.4M0.0 485.5L1581.0 1398.4M0.0 471.5L1581.0 1384.4M0.0 457.5L1581.0 1370.4M0.0 429.4L1581.0 1342.3M0.0 415.4L1581.0 1328.3M0.0 401.4L1581.0 1314.3M0.0 387.4L1581.0 1300.3M0.0 373.4L1581.0 1286.2M0.0 359.3L1581.0 1272.2M0.0 345.3L1581.0 1258.2M0.0 331.3L1581.0 1244.2M0.0 317.3L1581.0 1230.1M0.0 289.2L1581.0 1202.1M0.0 275.2L1581.0 1188.1M0.0 261.2L1581.0 1174.0M0.0 247.1L1581.0 1160.0M0.0 233.1L1581.0 1146.0M0.0 219.1L1581.0 1132.0M0.0 205.1L1581.0 1117.9M0.0 191.0L1581.0 1103.9M0.0 177.0L1581.0 1089.9M0.0 149.0L1581.0 1061.8M0.0 134.9L1581.0 1047.8M0.0 120.9L1581.0 1033.8M0.0 106.9L1581.0 1019.8M0.0 92.9L1581.0 1005.7M0.0 78.8L1581.0 991.7M0.0 64.8L1581.0 977.7M0.0 50.8L1581.0 963.7M0.0 36.8L1581.0 949.7M0.0 8.7L1581.0 921.6M0.0 -5.3L1581.0 907.6M0.0 -19.3L1581.0 893.6M0.0 -33.3L1581.0 879.5M0.0 -47.4L1581.0 865.5M0.0 -61.4L1581.0 851.5M0.0 -75.4L1581.0 837.5M0.0 -89.4L1581.0 823.4M0.0 -103.5L1581.0 809.4M0.0 -131.5L1581.0 781.4M0.0 -145.5L1581.0 767.3M0.0 -159.6L1581.0 753.3M0.0 -173.6L1581.0 739.3M0.0 -187.6L1581.0 725.3M0.0 -201.6L1581.0 711.2M0.0 -215.7L1581.0 697.2M0.0 -229.7L1581.0 683.2M0.0 -243.7L1581.0 669.2M0.0 -271.8L1581.0 641.1M0.0 -285.8L1581.0 627.1M0.0 -299.8L1581.0 613.1M0.0 -313.8L1581.0 599.1M0.0 -327.8L1581.0 585.0M0.0 -341.9L1581.0 571.0M0.0 -355.9L1581.0 557.0M0.0 -369.9L1581.0 543.0M0.0 -383.9L1581.0 528.9M0.0 -412.0L1581.0 500.9M0.0 -426.0L1581.0 486.9M0.0 -440.0L1581.0 472.8M0.0 -454.1L1581.0 458.8M0.0 -468.1L1581.0 444.8M0.0 -482.1L1581.0 430.8M0.0 -496.1L1581.0 416.7M0.0 -510.2L1581.0 402.7M0.0 -524.2L1581.0 388.7M0.0 -552.2L1581.0 360.6M0.0 -566.3L1581.0 346.6M0.0 -580.3L1581.0 332.6M0.0 -594.3L1581.0 318.6M0.0 -608.3L1581.0 304.5M0.0 -622.4L1581.0 290.5M0.0 -636.4L1581.0 276.5M0.0 -650.4L1581.0 262.5M0.0 -664.4L1581.0 248.5M0.0 -692.5L1581.0 220.4M0.0 -706.5L1581.0 206.4M0.0 -720.5L1581.0 192.4M0.0 -734.5L1581.0 178.3M0.0 -748.6L1581.0 164.3M0.0 -762.6L1581.0 150.3M0.0 -776.6L1581.0 136.3M0.0 -790.6L1581.0 122.2M0.0 -804.7L1581.0 108.2M0.0 -832.7L1581.0 80.2M0.0 -846.7L1581.0 66.1M0.0 -860.8L1581.0 52.1M0.0 -874.8L1581.0 38.1M0.0 -888.8L1581.0 24.1M0.0 -902.8L1581.0 10.0" stroke="#90d5ec" stroke-opacity="0.6" stroke-width="1.25" fill="none"/>
<path d="M0.0 1699.8L1581.0 786.9M0.0 1559.5L1581.0 646.7M0.0 1419.3L1581.0 506.4M0.0 1279.0L1581.0 366.2M0.0 1138.8L1581.0 225.9M0.0 998.6L1581.0 85.7M0.0 858.3L1581.0 -54.5M0.0 718.1L1581.0 -194.8M0.0 577.8L1581.0 -335.0M0.0 437.6L1581.0 -475.3M0.0 297.4L1581.0 -615.5M0.0 157.1L1581.0 -755.7M0.0 16.9L1581.0 -896.0" stroke="#4a9fca" stroke-opacity="0.64" stroke-width="1.2" fill="none"/>
<path d="M0.0 864.2L1581.0 1777.1M0.0 724.0L1581.0 1636.8M0.0 583.7L1581.0 1496.6M0.0 443.5L1581.0 1356.3M0.0 303.2L1581.0 1216.1M0.0 163.0L1581.0 1075.9M0.0 22.8L1581.0 935.6M0.0 -117.5L1581.0 795.4M0.0 -257.7L1581.0 655.1M0.0 -398.0L1581.0 514.9M0.0 -538.2L1581.0 374.7M0.0 -678.4L1581.0 234.4M0.0 -818.7L1581.0 94.2" stroke="#4a9fca" stroke-opacity="0.64" stroke-width="1.2" fill="none"/>
<g>
<polygon points="845.0,668.2 572.2,510.7 845.0,353.2 1117.8,510.7" fill="#ffffff" opacity="0.55" filter="url(#blur2)"/>
<polygon points="845.0,651.3 601.4,510.7 845.0,370.1 1088.6,510.7" fill="#7c8693" opacity="0.42" filter="url(#blur)" transform="translate(0,5.5)"/>
<polyline points="601.4,510.7 845.0,651.3 1088.6,510.7" fill="none" stroke="#1d3f69" stroke-width="1.7" stroke-linejoin="round" transform="translate(0,0.5)"/>
<polygon points="845.0,637.3 601.4,496.7 845.0,356.1 1088.6,496.7" fill="#f67c55" stroke="#34577f" stroke-width="1.3" stroke-linejoin="round" />
<polygon points="845.0,651.3 601.4,510.7 601.4,496.7 845.0,637.3" fill="#8f4a31" stroke="#34577f" stroke-width="1.3" stroke-linejoin="round" />
<polygon points="845.0,651.3 1088.6,510.7 1088.6,496.7 845.0,637.3" fill="#c86445" stroke="#34577f" stroke-width="1.3" stroke-linejoin="round" />
<polygon points="845.0,623.2 625.8,496.7 625.8,384.3 845.0,510.9" fill="#8f4a31" stroke="#34577f" stroke-width="1.3" stroke-linejoin="round" />
<polygon points="845.0,623.2 1064.2,496.7 1064.2,384.3 845.0,510.9" fill="#c86445"/>
<polygon points="930.3,574.0 979.0,545.9 966.8,538.8 930.3,559.9" fill="#f67c55"/>
<polygon points="979.0,461.6 979.0,545.9 966.8,538.8 966.8,468.7" fill="#8f4a31" stroke="#34577f" stroke-width="1.2" stroke-linejoin="round" />
<polyline points="845.0,510.9 845.0,623.2 930.3,574.0 930.3,489.8 979.0,461.6 979.0,545.9 1064.2,496.7 1064.2,384.3" fill="none" stroke="#34577f" stroke-width="1.3" stroke-linejoin="round"/>
<polyline points="930.3,559.9 966.8,538.8" fill="none" stroke="#34577f" stroke-width="1.1" stroke-linejoin="round"/>
<polygon points="796.3,538.9 820.6,553.0 820.6,581.1 796.3,567.0" fill="#8f4a31"/>
<polygon points="796.3,538.9 808.5,546.0 808.5,560.0 796.3,567.0" fill="#c86445"/>
<polygon points="796.3,567.0 808.5,560.0 820.6,567.0 820.6,581.1" fill="#f67c55"/>
<polyline points="808.5,546.0 808.5,560.0 820.6,567.0" fill="none" stroke="#34577f" stroke-width="1.1" stroke-linejoin="round"/>
<polyline points="796.3,567.0 808.5,560.0" fill="none" stroke="#34577f" stroke-width="1.1" stroke-linejoin="round"/>
<polygon points="796.3,538.9 820.6,553.0 820.6,581.1 796.3,567.0" fill="none" stroke="#34577f" stroke-width="1.3" stroke-linejoin="round" />
<polygon points="796.3,496.8 820.6,510.9 820.6,538.9 796.3,524.9" fill="#8f4a31"/>
<polygon points="796.3,496.8 808.5,503.8 808.5,517.8 796.3,524.9" fill="#c86445"/>
<polygon points="796.3,524.9 808.5,517.8 820.6,524.9 820.6,538.9" fill="#f67c55"/>
<polyline points="808.5,503.8 808.5,517.8 820.6,524.9" fill="none" stroke="#34577f" stroke-width="1.1" stroke-linejoin="round"/>
<polyline points="796.3,524.9 808.5,517.8" fill="none" stroke="#34577f" stroke-width="1.1" stroke-linejoin="round"/>
<polygon points="796.3,496.8 820.6,510.9 820.6,538.9 796.3,524.9" fill="none" stroke="#34577f" stroke-width="1.3" stroke-linejoin="round" />
<polygon points="759.7,517.8 784.1,531.9 784.1,560.0 759.7,545.9" fill="#8f4a31"/>
<polygon points="759.7,517.8 771.9,524.9 771.9,538.9 759.7,545.9" fill="#c86445"/>
<polygon points="759.7,545.9 771.9,538.9 784.1,545.9 784.1,560.0" fill="#f67c55"/>
<polyline points="771.9,524.9 771.9,538.9 784.1,545.9" fill="none" stroke="#34577f" stroke-width="1.1" stroke-linejoin="round"/>
<polyline points="759.7,545.9 771.9,538.9" fill="none" stroke="#34577f" stroke-width="1.1" stroke-linejoin="round"/>
<polygon points="759.7,517.8 784.1,531.9 784.1,560.0 759.7,545.9" fill="none" stroke="#34577f" stroke-width="1.3" stroke-linejoin="round" />
<polygon points="759.7,475.7 784.1,489.8 784.1,517.8 759.7,503.8" fill="#8f4a31"/>
<polygon points="759.7,475.7 771.9,482.7 771.9,496.8 759.7,503.8" fill="#c86445"/>
<polygon points="759.7,503.8 771.9,496.8 784.1,503.8 784.1,517.8" fill="#f67c55"/>
<polyline points="771.9,482.7 771.9,496.8 784.1,503.8" fill="none" stroke="#34577f" stroke-width="1.1" stroke-linejoin="round"/>
<polyline points="759.7,503.8 771.9,496.8" fill="none" stroke="#34577f" stroke-width="1.1" stroke-linejoin="round"/>
<polygon points="759.7,475.7 784.1,489.8 784.1,517.8 759.7,503.8" fill="none" stroke="#34577f" stroke-width="1.3" stroke-linejoin="round" />
<polygon points="845.0,510.9 601.4,370.3 723.2,159.6 966.8,300.2" fill="#c86445" stroke="#34577f" stroke-width="1.3" stroke-linejoin="round" />
<polygon points="845.0,510.9 966.8,300.2 1088.6,370.3" fill="#c86445" stroke="#34577f" stroke-width="1.3" stroke-linejoin="round" />
<polygon points="650.1,229.9 687.1,251.3 687.1,363.6 650.1,342.2" fill="#8f4a31" stroke="#34577f" stroke-width="1.3" stroke-linejoin="round"/>
<polygon points="687.1,251.3 724.2,229.9 724.2,299.5 687.1,363.6" fill="#c86445" stroke="#34577f" stroke-width="1.3" stroke-linejoin="round"/>
<polygon points="687.1,251.3 724.2,229.9 687.1,208.5 650.1,229.9" fill="#f67c55" stroke="#34577f" stroke-width="1.3" stroke-linejoin="round"/>
<polygon points="662.3,229.9 687.1,215.6 687.1,244.2 687.1,244.2" fill="#c86445"/>
<polygon points="687.1,215.6 712.0,229.9 687.1,244.2 687.1,244.2" fill="#8f4a31"/>
<polyline points="687.1,215.6 687.1,243.7" fill="none" stroke="#34577f" stroke-width="1.1" stroke-linejoin="round"/>
<polygon points="662.3,229.9 687.1,215.6 712.0,229.9 687.1,244.2" fill="none" stroke="#34577f" stroke-width="1.3" stroke-linejoin="round"/>
<clipPath id="holeclip"><polygon points="991.2,356.3 991.1,353.9 990.8,351.7 990.3,349.6 989.7,347.6 988.9,345.8 987.9,344.2 986.8,342.8 985.5,341.6 984.0,340.6 982.5,339.9 980.8,339.3 979.0,339.1 977.1,339.0 975.1,339.2 973.1,339.6 971.0,340.3 968.9,341.2 966.8,342.3 964.7,343.7 962.6,345.2 960.5,346.9 958.5,348.8 956.5,350.9 954.6,353.1 952.8,355.5 951.1,357.9 949.6,360.5 948.1,363.1 946.8,365.8 945.7,368.5 944.7,371.3 943.9,374.0 943.3,376.7 942.8,379.4 942.5,382.0 942.4,384.5 942.5,386.9 942.8,389.1 943.3,391.2 943.9,393.2 944.7,395.0 945.7,396.6 946.8,398.0 948.1,399.2 949.6,400.2 951.1,400.9 952.8,401.5 954.6,401.7 956.5,401.8 958.5,401.6 960.5,401.2 962.6,400.5 964.7,399.6 966.8,398.5 968.9,397.1 971.0,395.6 973.1,393.9 975.1,392.0 977.1,389.9 979.0,387.7 980.8,385.3 982.5,382.9 984.0,380.3 985.5,377.7 986.8,375.0 987.9,372.3 988.9,369.5 989.7,366.8 990.3,364.1 990.8,361.4 991.1,358.8"/></clipPath>
<polygon points="991.2,356.3 991.1,353.9 990.8,351.7 990.3,349.6 989.7,347.6 988.9,345.8 987.9,344.2 986.8,342.8 985.5,341.6 984.0,340.6 982.5,339.9 980.8,339.3 979.0,339.1 977.1,339.0 975.1,339.2 973.1,339.6 971.0,340.3 968.9,341.2 966.8,342.3 964.7,343.7 962.6,345.2 960.5,346.9 958.5,348.8 956.5,350.9 954.6,353.1 952.8,355.5 951.1,357.9 949.6,360.5 948.1,363.1 946.8,365.8 945.7,368.5 944.7,371.3 943.9,374.0 943.3,376.7 942.8,379.4 942.5,382.0 942.4,384.5 942.5,386.9 942.8,389.1 943.3,391.2 943.9,393.2 944.7,395.0 945.7,396.6 946.8,398.0 948.1,399.2 949.6,400.2 951.1,400.9 952.8,401.5 954.6,401.7 956.5,401.8 958.5,401.6 960.5,401.2 962.6,400.5 964.7,399.6 966.8,398.5 968.9,397.1 971.0,395.6 973.1,393.9 975.1,392.0 977.1,389.9 979.0,387.7 980.8,385.3 982.5,382.9 984.0,380.3 985.5,377.7 986.8,375.0 987.9,372.3 988.9,369.5 989.7,366.8 990.3,364.1 990.8,361.4 991.1,358.8" fill="url(#holegrad)"/>
<polygon points="979.0,349.3 978.9,346.9 978.6,344.6 978.1,342.5 977.5,340.6 976.7,338.8 975.7,337.2 974.6,335.7 973.3,334.5 971.8,333.6 970.3,332.8 968.6,332.3 966.8,332.0 964.9,332.0 963.0,332.2 960.9,332.6 958.9,333.3 956.7,334.2 954.6,335.3 952.5,336.6 950.4,338.2 948.3,339.9 946.3,341.8 944.3,343.9 942.4,346.1 940.6,348.4 939.0,350.9 937.4,353.5 936.0,356.1 934.7,358.8 933.5,361.5 932.5,364.2 931.7,367.0 931.1,369.7 930.6,372.3 930.4,374.9 930.3,377.4 930.4,379.8 930.6,382.1 931.1,384.2 931.7,386.2 932.5,388.0 933.5,389.6 934.7,391.0 936.0,392.2 937.4,393.2 939.0,393.9 940.6,394.4 942.4,394.7 944.3,394.8 946.3,394.6 948.3,394.1 950.4,393.5 952.5,392.6 954.6,391.4 956.7,390.1 958.9,388.6 960.9,386.9 963.0,384.9 964.9,382.9 966.8,380.7 968.6,378.3 970.3,375.8 971.8,373.3 973.3,370.6 974.6,368.0 975.7,365.2 976.7,362.5 977.5,359.8 978.1,357.1 978.6,354.4 978.9,351.8" fill="#c86445" stroke="#34577f" stroke-width="1.2" clip-path="url(#holeclip)"/>
<polygon points="991.2,356.3 991.1,353.9 990.8,351.7 990.3,349.6 989.7,347.6 988.9,345.8 987.9,344.2 986.8,342.8 985.5,341.6 984.0,340.6 982.5,339.9 980.8,339.3 979.0,339.1 977.1,339.0 975.1,339.2 973.1,339.6 971.0,340.3 968.9,341.2 966.8,342.3 964.7,343.7 962.6,345.2 960.5,346.9 958.5,348.8 956.5,350.9 954.6,353.1 952.8,355.5 951.1,357.9 949.6,360.5 948.1,363.1 946.8,365.8 945.7,368.5 944.7,371.3 943.9,374.0 943.3,376.7 942.8,379.4 942.5,382.0 942.4,384.5 942.5,386.9 942.8,389.1 943.3,391.2 943.9,393.2 944.7,395.0 945.7,396.6 946.8,398.0 948.1,399.2 949.6,400.2 951.1,400.9 952.8,401.5 954.6,401.7 956.5,401.8 958.5,401.6 960.5,401.2 962.6,400.5 964.7,399.6 966.8,398.5 968.9,397.1 971.0,395.6 973.1,393.9 975.1,392.0 977.1,389.9 979.0,387.7 980.8,385.3 982.5,382.9 984.0,380.3 985.5,377.7 986.8,375.0 987.9,372.3 988.9,369.5 989.7,366.8 990.3,364.1 990.8,361.4 991.1,358.8" fill="none" stroke="#34577f" stroke-width="1.3"/>
</g>
</svg><svg class="abs" style="left:0;top:0;z-index:2" width="160" height="340" viewBox="0 0 160 340">
<defs><linearGradient id="vcl" x1="0" y1="0" x2="0" y2="1"><stop offset="0" stop-color="#ffffff" stop-opacity="0.55"/><stop offset="0.5" stop-color="#f3f3f3" stop-opacity="0.6"/><stop offset="1" stop-color="#d6d6d6" stop-opacity="0.85"/></linearGradient><filter id="vcb" x="-20%" y="-50%" width="140%" height="200%"><feGaussianBlur stdDeviation="0.800"/></filter></defs>
<polyline points="28.3,84.4 63.3,111.0 96.7,85.6" fill="none" stroke="#b9b9b9" stroke-width="3" stroke-opacity="0.8" filter="url(#vcb)" transform="translate(0,0.5)"/>
<polygon points="63.9,23.1 103.3,40.6 63.3,62.2 22.8,40.0" fill="#ffffff" fill-opacity="0.55" stroke="#a8a8a8" stroke-width="1"/>
<polygon points="22.8,40.0 63.3,62.2 63.3,111.0 28.3,84.4" fill="url(#vcl)" stroke="#a8a8a8" stroke-width="1"/>
<polygon points="63.3,62.2 103.3,40.6 96.7,85.6 63.3,111.0" fill="url(#vcl)" stroke="#a8a8a8" stroke-width="1"/>
<circle cx="35" cy="145.0" r="16.600" fill="none" stroke="#8d8d8d" stroke-width="1"/>
<circle cx="35" cy="186.8" r="16.600" fill="none" stroke="#8d8d8d" stroke-width="1"/>
<circle cx="35" cy="229.0" r="16.600" fill="none" stroke="#8d8d8d" stroke-width="1"/>
<circle cx="35" cy="271.0" r="16.600" fill="none" stroke="#8d8d8d" stroke-width="1"/>
<circle cx="35" cy="312.8" r="16.600" fill="none" stroke="#8d8d8d" stroke-width="1"/>
<path d="M27.500 146l7.500-7 7.500 7M30 144.500v6.500h3.500v-4.500h3v4.500H40v-6.500" stroke="#b4b4b4" stroke-width="1.300" fill="none"/>
<path d="M27.500 183v-4h4M38.500 179h4v4M42.500 190.500v4h-4M31.500 194.500h-4v-4" stroke="#b9b9b9" stroke-width="1.300" fill="none"/>
<path d="M35 222.500v13M28.500 229h13" stroke="#a9a9a9" stroke-width="1.600" fill="none"/>
<path d="M27.500 271h15" stroke="#a9a9a9" stroke-width="1.600" fill="none"/>
<path d="M30 309l2-2.500h8.500v9l-2 2.500h-8.500zM30 309h8.500v9M38.500 309l2-2.500M26.500 320h17" stroke="#adadad" stroke-width="1.100" fill="none"/>
</svg>
<span style="position:absolute;white-space:nowrap;line-height:0;font-size:10.500px;color:#7e8d9c;transform-origin:0 0;z-index:3;letter-spacing:-0.300px;left:44.500px;top:46.500px;transform:matrix(0.86,-0.38,0.55,0.35,0,0) scale(1.05,1.3)">СВЕРХУ</span>
<span style="position:absolute;white-space:nowrap;line-height:0;font-size:10.500px;color:#7e8d9c;transform-origin:0 0;z-index:3;letter-spacing:-0.300px;left:31px;top:67.500px;transform:matrix(0.84,0.42,0,1,0,0) scale(0.95,1.25)">СЛЕВА</span>
<span style="position:absolute;white-space:nowrap;line-height:0;font-size:10.500px;color:#7e8d9c;transform-origin:0 0;z-index:3;letter-spacing:-0.300px;left:66px;top:87px;transform:matrix(0.84,-0.45,0,1,0,0) scale(0.8,1.25)">СПЕРЕДИ</span>
<div class="abs" style="left:1449.700px;top:815.5px;width:120.600px;height:21px;background:rgba(255,255,255,.78);border:1px solid rgba(222,228,236,.9);border-radius:3px;z-index:2"></div>
<span class="t" style="left:1481.50px;top:824.91px;font-size:11.80px;color:#8b98a8;letter-spacing:0.073px;z-index:3;">Ред. сетку</span>
<div class="abs" style="left:1468.300px;top:847.5px;width:102px;height:21px;background:rgba(255,255,255,.78);border:1px solid rgba(222,228,236,.9);border-radius:3px;z-index:2"></div>
<span class="t" style="left:1477.00px;top:858.71px;font-size:11.80px;color:#8b98a8;letter-spacing:0.015px;z-index:3;">1,0 мм</span>
<svg class="abs" style="left:1553.500px;top:855.0px;z-index:3" width="8" height="5" viewBox="0 0 8 5"><path d="M0 4.500L4 0.500 8 4.500z" fill="#222"/></svg>
<span class="t" style="left:1313.00px;top:857.27px;font-size:12.20px;color:#6a7c92;letter-spacing:0.300px;z-index:3;">Сетка Шаговой Привязки</span></section>
<aside id="panel" class="abs" style="left:1581px;top:97px;width:276px;height:880px;background:#f1f1f4;overflow:hidden">
<svg class="abs" style="left:55px;top:12px" width="36" height="38" viewBox="0 0 36 38"><path d="M1.500 4.200L32.800 1.200 33 35.500 2.600 33.500z" fill="#e6f0f7" stroke="#1b8fc4" stroke-width="1.500" stroke-linejoin="round"/><path d="M6.700 3.700l.7 30M11.800 3.200l.6 30.800M17 2.700l.4 31.600M22.200 2.200l.3 32.400M27.500 1.700l.2 33.300M1.700 9.200l31.100-2.400M1.900 14.200l31-1.700M2.100 19.200l30.900-.9M2.200 24.200l30.800-.2M2.400 29l30.600.6" stroke="#1b8fc4" stroke-width="0.900" fill="none"/></svg>
<svg class="abs" style="left:184px;top:14px" width="38" height="36" viewBox="0 0 38 36"><path d="M1.800 2L9.300 1.300 10.800 24.500 35.800 26.200 35.800 34.300 4 32.700z" fill="#e6f0f7" stroke="#1b8fc4" stroke-width="1.600" stroke-linejoin="round"/><path d="M5.500 7.500h3M5.800 13.500h3.500M6.200 19.500h3M12.500 28v3M18.500 28.300v4M24.500 28.600v3M30.500 29v4" stroke="#1b8fc4" stroke-width="1" fill="none"/></svg>
<span class="t" style="left:27.60px;top:62.69px;font-size:13.60px;color:#6a7c92;letter-spacing:-0.500px;">Рабоч. плоск-ть</span>
<span class="t" style="left:177.60px;top:62.69px;font-size:13.60px;color:#6a7c92;letter-spacing:-0.358px;">Линейка</span>
<div class="abs" style="left:0;top:79px;width:276px;height:1px;background:#dfe3e9"></div>
<div class="abs" style="left:6px;top:86px;width:264px;height:61px;background:#f4f4f7;border:1px solid #e3e6ec;border-radius:4px;box-shadow:0 1px 3px rgba(100,110,130,.25)"></div>
<span class="t" style="left:16.40px;top:103.32px;font-size:11.20px;color:#5f6e81;letter-spacing:0.027px;">Tinkercad</span>
<span class="t" style="left:16.40px;top:125.40px;font-size:15.00px;color:#4a5a70;letter-spacing:0.360px;">Основные формы</span>
<svg class="abs" style="left:242px;top:115px" width="11" height="6" viewBox="0 0 11 6"><path d="M0.300 0h10.400L5.500 5.800z" fill="#111"/></svg>
<div class="abs" style="left:6px;top:158px;width:264px;height:1px;background:#dfe3e9"></div>
<div class="abs" style="left:263px;top:160px;width:7px;height:282px;border-radius:4px;background:#c1c1c3"></div>
<svg class="abs" style="left:0;top:0" width="276" height="880" viewBox="0 0 276 880">
<defs><pattern id="hatch" width="11.6" height="11.6" patternUnits="userSpaceOnUse" patternTransform="rotate(-45) translate(2,0)"><rect width="5.8" height="11.6" fill="#8e95a1" opacity="0.45"/></pattern><filter id="pblur" x="-50%" y="-50%" width="200%" height="200%"><feGaussianBlur stdDeviation="9"/></filter><radialGradient id="sph" cx="0.68" cy="0.34" r="0.8"><stop offset="0" stop-color="#08a6e2"/><stop offset="0.55" stop-color="#0c8cc6"/><stop offset="1" stop-color="#0a6a9c"/></radialGradient><linearGradient id="cone" x1="0" y1="0" x2="1" y2="0"><stop offset="0" stop-color="#4f2468"/><stop offset="0.55" stop-color="#85409f"/><stop offset="1" stop-color="#6f338a"/></linearGradient><linearGradient id="rr" x1="0" y1="0" x2="1" y2="0.3"><stop offset="0" stop-color="#4f99a6"/><stop offset="0.6" stop-color="#6fcbd8"/><stop offset="1" stop-color="#5fb4c2"/></linearGradient></defs>
<ellipse cx="74.0" cy="226.0" rx="36.0" ry="36.0" fill="#6c6c78" opacity="0.10" filter="url(#pblur)"/>
<ellipse cx="201.0" cy="226.0" rx="34.0" ry="36.0" fill="#6c6c78" opacity="0.10" filter="url(#pblur)"/>
<polygon points="38.1,209.3 95.7,217.7 94.6,267.2 41.5,256.7" fill="#b4bbc7" stroke="#7e858f" stroke-width="1.2" stroke-linejoin="round"/><polygon points="95.7,217.7 110.6,191.7 107.6,236.1 94.6,267.2" fill="#cbd2dd" stroke="#7e858f" stroke-width="1.2" stroke-linejoin="round"/><polygon points="59.8,184.2 110.6,191.7 95.7,217.7 38.1,209.3" fill="#d4dae5" stroke="#7e858f" stroke-width="1.2" stroke-linejoin="round"/><polygon points="59.8,184.2 110.6,191.7 107.6,236.1 94.6,267.2 41.5,256.7 38.1,209.3" fill="url(#hatch)"/><polygon points="59.8,184.2 110.6,191.7 107.6,236.1 94.6,267.2 41.5,256.7 38.1,209.3" fill="none" stroke="#7e858f" stroke-width="1.3" stroke-linejoin="round"/><polyline points="38.1,209.3 95.7,217.7 110.6,191.7" fill="none" stroke="#7e858f" stroke-width="0.8"/><polyline points="95.7,217.7 94.6,267.2" fill="none" stroke="#7e858f" stroke-width="0.8"/>
<defs><linearGradient id="cg1" x1="0" y1="0" x2="1" y2="0"><stop offset="0" stop-color="#9ea5b1"/><stop offset="0.75" stop-color="#d6dce7"/><stop offset="1" stop-color="#d6dce7"/></linearGradient></defs><path d="M172.1 200.9 L174.3 249.9 A26.6 12.6 0 0 0 227.5 249.9 L230.5 200.9 A29.2 13.5 0 0 1 172.1 200.9 Z" fill="url(#cg1)" stroke="#7e858f" stroke-width="1.2"/><ellipse cx="201.3" cy="200.9" rx="29.2" ry="13.5" fill="#d4dae5" stroke="#7e858f" stroke-width="1.100"/><path d="M172.1 200.9 L174.3 249.9 A26.6 12.6 0 0 0 227.5 249.9 L230.5 200.9 A29.2 13.5 0 0 1 172.1 200.9 Z" fill="url(#hatch)"/><ellipse cx="201.3" cy="200.9" rx="29.2" ry="13.5" fill="url(#hatch)"/>
<ellipse cx="74.0" cy="380.0" rx="36.0" ry="36.0" fill="#6c6c78" opacity="0.10" filter="url(#pblur)"/>
<ellipse cx="201.0" cy="380.0" rx="34.0" ry="36.0" fill="#6c6c78" opacity="0.10" filter="url(#pblur)"/>
<polygon points="38.1,361.3 95.7,369.7 94.6,419.3 41.5,408.7" fill="#a9121f" stroke="#8c0f1a" stroke-width="1.2" stroke-linejoin="round"/><polygon points="95.7,369.7 110.6,343.7 107.6,388.1 94.6,419.3" fill="#bb1525" stroke="#8c0f1a" stroke-width="1.2" stroke-linejoin="round"/><polygon points="59.8,336.2 110.6,343.7 95.7,369.7 38.1,361.3" fill="#c9172a" stroke="#8c0f1a" stroke-width="1.2" stroke-linejoin="round"/>
<defs><linearGradient id="cg2" x1="0" y1="0" x2="1" y2="0"><stop offset="0" stop-color="#8f4811"/><stop offset="0.75" stop-color="#e07a1d"/><stop offset="1" stop-color="#e07a1d"/></linearGradient></defs><path d="M172.1 352.9 L174.3 401.9 A26.6 12.6 0 0 0 227.5 401.9 L230.5 352.9 A29.2 13.5 0 0 1 172.1 352.9 Z" fill="url(#cg2)" stroke="#8a4510" stroke-width="1.2"/><ellipse cx="201.3" cy="352.9" rx="29.2" ry="13.5" fill="#d8731c" stroke="#8a4510" stroke-width="1.100"/>
<ellipse cx="76.0" cy="524.0" rx="36.0" ry="36.0" fill="#6c6c78" opacity="0.13" filter="url(#pblur)"/>
<circle cx="76.0" cy="528.7" r="27.800" fill="url(#sph)"/>
<path d="M173.1 524.7 L174.5 551.8 L179.9 552.9 L182.3 543.6 L183.7 555.8 L191.8 560.2 L197.5 555.8 L198.6 543.6 L204.0 555.8 L214.8 565.3 L222.9 567.7 L224.3 543.6 L225.7 513.9 L219.6 512.5 L218.2 534.2 L212.1 520.6 L195.9 513.9 L182.3 520.6" fill="#7d9fbd"/>
<path d="M176.9 526.7 C178.3 520.6 183.7 520.6 185.0 526.0 S187.7 536.9 191.8 534.2 S191.8 516.6 196.5 515.5 S204.0 524.7 209.4 531.5 S217.5 540.9 220.9 539.6 S212.1 524.7 212.1 517.9 S214.8 509.8 217.5 511.8" fill="none" stroke="#a3c8e4" stroke-width="8" stroke-linecap="round" stroke-linejoin="round"/>
<path d="M222.3 519.3 v-7" stroke="#a3c8e4" stroke-width="5.500" stroke-linecap="round"/>
<ellipse cx="76.0" cy="678.0" rx="36.0" ry="34.0" fill="#6c6c78" opacity="0.16" filter="url(#pblur)"/>
<ellipse cx="201.0" cy="680.0" rx="34.0" ry="36.0" fill="#6c6c78" opacity="0.16" filter="url(#pblur)"/>
<polygon points="83.9,658.7 60.5,675.4 40.4,703.8 67.2,685.2" fill="#2a7030" stroke="#1f6a24" stroke-width="1" stroke-linejoin="round"/>
<polygon points="67.2,685.2 40.4,703.8 94.3,715.3" fill="#338a38" stroke="#1f6a24" stroke-width="1" stroke-linejoin="round"/>
<polygon points="83.9,658.7 108.5,684.8 94.3,715.3 67.2,685.2" fill="#45b549" stroke="#1f6a24" stroke-width="1" stroke-linejoin="round"/>
<path d="M200.9 657.8 L174.7 704.2 A26.600 15.500 0 0 0 227.3 704.2 Z" fill="url(#cone)" stroke="#4b2262" stroke-width="1" stroke-linejoin="round"/>
<ellipse cx="76.0" cy="834.0" rx="36.0" ry="30.0" fill="#6c6c78" opacity="0.13" filter="url(#pblur)"/>
<ellipse cx="203.0" cy="836.0" rx="34.0" ry="26.0" fill="#6c6c78" opacity="0.15" filter="url(#pblur)"/>
<path d="M40.4 857.0 C40.8 850.2 53.7 825.8 68.6 814.7 C79.4 809.6 103.8 813.6 108.9 835.3 C108.5 844.8 101.1 858.3 94.3 869.4 L94.3 869.4 Z" fill="url(#rr)" stroke="#3f8793" stroke-width="1" stroke-linejoin="round"/>
<path d="M40.4 857.0 C42.2 843.4 53.7 838.0 65.9 839.4 C80.8 841.0 93.0 852.9 94.3 869.4 Z" fill="#58949f" stroke="#3f8793" stroke-width="1" stroke-linejoin="round"/>
</svg>
<span class="t" style="left:168.6px;top:827.2px;font-size:32px;font-weight:bold;font-style:italic;color:#d81a29;letter-spacing:-2.300px;transform-origin:0 0;transform:matrix(0.93,0.17,-0.12,0.8,0,0);text-shadow:0 1px 0 #b5131f,-1px 2px 0 #b5131f,-1px 3px 0 #a8111d,-1px 4px 0 #a8111d,-2px 5px 0 #9a0f1a,-2px 6px 0 #9a0f1a,-2px 7px 0 #8f0e18,-2px 8px 0 #8f0e18,-3px 9px 0 #8f0e18">TEXT</span>
<span class="t" style="left:22.50px;top:281.86px;font-size:13.40px;color:#6a7c92;letter-spacing:-0.151px;">Параллелепип...</span>
<span class="t" style="left:172.90px;top:281.86px;font-size:13.40px;color:#6a7c92;letter-spacing:0.147px;">Цилиндр</span>
<span class="t" style="left:22.50px;top:433.86px;font-size:13.40px;color:#6a7c92;letter-spacing:-0.151px;">Параллелепип...</span>
<span class="t" style="left:172.90px;top:433.86px;font-size:13.40px;color:#6a7c92;letter-spacing:0.147px;">Цилиндр</span>
<span class="t" style="left:55.80px;top:587.06px;font-size:13.40px;color:#6a7c92;letter-spacing:-0.632px;">Сфера</span>
<span class="t" style="left:175.80px;top:587.06px;font-size:13.40px;color:#6a7c92;letter-spacing:0.211px;">Scribble</span>
<span class="t" style="left:54.40px;top:740.86px;font-size:13.40px;color:#6a7c92;letter-spacing:0.101px;">Крыша</span>
<span class="t" style="left:183.00px;top:740.86px;font-size:13.40px;color:#6a7c92;letter-spacing:0.078px;">Конус</span>
</aside>
<div class="abs" style="left:1571px;top:514.3px;width:16px;height:47px;background:#f3f3f6;border:1px solid #dcdfe6;border-right:none;z-index:4"></div>
<svg class="abs" style="left:1575px;top:525.5px;z-index:5" width="10" height="24" viewBox="0 0 10 24"><path d="M2.200 1L8.300 12 2.200 23" stroke="#000" stroke-width="2" fill="none"/></svg>
</main>
<nav id="taskbar" class="abs" style="left:1857px;top:0;width:63px;height:1080px;background:#0b0b0b;overflow:hidden">
<svg class="abs" style="left:0;top:0" width="63" height="1080" viewBox="0 0 63 1080">
<defs><linearGradient id="tbg" x1="0" y1="0" x2="1" y2="1"><stop offset="0" stop-color="#1c4a15"/><stop offset="1" stop-color="#1f3f1a"/></linearGradient><radialGradient id="ut" cx="0.4" cy="0.3" r="0.8"><stop offset="0" stop-color="#8fd14f"/><stop offset="1" stop-color="#4e9a2a"/></radialGradient><radialGradient id="st" cx="0.5" cy="0.2" r="0.9"><stop offset="0" stop-color="#1b3f73"/><stop offset="0.6" stop-color="#13294d"/><stop offset="1" stop-color="#1a78b8"/></radialGradient></defs>
<polygon points="0,0 22,0 10,60 0,80" fill="#141414"/>
<polygon points="22,0 63,0 63,110 30,40" fill="#101010"/>
<polygon points="63,110 63,232 0,305 0,180 30,120" fill="#0e0e0e"/>
<polygon points="63,232 0,305 0,437 63,548" fill="url(#tbg)"/>
<polygon points="0,830 10,900 0,1080" fill="#141414"/>
<polygon points="63,900 40,1000 63,1080" fill="#101410"/>
<rect x="0" y="654" width="63" height="46" fill="#3c3c3c"/><rect x="61" y="654" width="2" height="46" fill="#5fb85f"/>
<path d="M31.600 4L51.900 35.600 41.400 49.200 36.400 41.700 31.800 49.200H16.200L11.400 37.500 18.200 25.300H27.300L22.800 17.700zM31.600 31.800L28.800 36.800H34.300z" fill="#fff" fill-rule="evenodd"/>
<circle cx="33.500" cy="70.500" r="5.500" stroke="#fff" stroke-width="1.300" fill="none"/><path d="M29.600 74.500L23.500 81" stroke="#fff" stroke-width="1.300"/>
<path d="M23.500 106.500h10M23.500 120.500h10M25 109.500h7.500v8H25z" stroke="#fff" stroke-width="1.200" fill="none"/><path d="M37.500 106v3M37.500 111v9.500" stroke="#fff" stroke-width="1.500" fill="none"/>
<circle cx="31" cy="159.500" r="12" fill="url(#ut)"/>
<circle cx="31" cy="207" r="11.500" fill="url(#st)"/><circle cx="35" cy="204" r="3.300" stroke="#fff" stroke-width="1.400" fill="none"/><path d="M20 208l7 3.200a3 3 0 0 0 5.500-1.500l3-2.500" stroke="#fff" stroke-width="2.600" fill="none" stroke-linecap="round"/>
<path d="M22 250l3-4 5 2 8-1 3-4 1 8c0 6-3 10-9 10s-9-3-10-7z" fill="#6b6458"/><circle cx="27.500" cy="252" r="2.300" fill="#fff"/><circle cx="33.500" cy="252" r="2.300" fill="#fff"/><circle cx="27.800" cy="252.300" r="1" fill="#000"/><circle cx="33.200" cy="252.300" r="1" fill="#000"/><path d="M32 258l10 5" stroke="#c87a2a" stroke-width="1.600"/><circle cx="21" cy="253" r="1.600" fill="#ddd"/>
<path d="M19.500 300.500L25 291h12l5.500 9.500L37 310H25z" fill="#3498db"/><path d="M27 296.300c1.800.6 2.700 2.200 4 4.200s2.200 3.600 4 4.200M35 296.300c-1.800.6-2.700 2.200-4 4.200s-2.200 3.600-4 4.200" stroke="#fff" stroke-width="1.800" fill="none"/>
<path d="M20 339h8l2 2h12v14H20z" fill="#f4b400"/><path d="M20 343h22v13H20z" fill="#fdd663"/><path d="M24 350h14v6H24z" fill="#4a9fe0"/><path d="M27 353h8v3h-8z" fill="#fdd663"/>
<path d="M21.500 386a2.500 2.500 0 0 1 2.500-2.500h14a2.500 2.500 0 0 1 2.500 2.500v19l-4-3.500H24a2.500 2.500 0 0 1-2.500-2.500z" fill="#7f8fd6"/><path d="M24.500 395c0-3 1.500-5 1.500-5 1.500-1 3-1.200 3-1.200l.4.700h3.200l.4-.7s1.500.2 3 1.200c0 0 1.500 2 1.500 5-1.500 1.500-3.200 1.500-3.200 1.500l-.7-1h-5.200l-.7 1s-1.700 0-3.200-1.500z" fill="#fff"/><ellipse cx="28.700" cy="393.300" rx="1.100" ry="1.300" fill="#7f8fd6"/><ellipse cx="33.300" cy="393.300" rx="1.100" ry="1.300" fill="#7f8fd6"/>
<rect x="19" y="430" width="24" height="24" rx="4" fill="#1a7fc0"/><circle cx="31" cy="443" r="6.500" stroke="#fff" stroke-width="1.700" fill="none"/><path d="M31 443l3-4M29 434.500h4" stroke="#fff" stroke-width="1.600" fill="none"/>
<g transform="translate(31.0,489.0)"><path d="M0 0L-9.53 -5.50A11 11 0 0 1 9.53 -5.50Z" fill="#ea4335"/><path d="M0 0L9.53 -5.50A11 11 0 0 1 0.00 11.00Z" fill="#fbbc05"/><path d="M0 0L0.00 11.00A11 11 0 0 1 -9.53 -5.50Z" fill="#34a853"/><circle r="5.06" fill="#fff"/><circle r="3.96" fill="#4285f4"/></g>
<circle cx="31" cy="536" r="10.800" stroke="#e0143c" stroke-width="1.800" fill="none"/><ellipse cx="31" cy="536" rx="5.500" ry="9" stroke="#e0143c" stroke-width="1.600" fill="none"/>
<circle cx="36" cy="576.500" r="3.800" fill="#5b5fc7"/><circle cx="42" cy="577.500" r="2.600" fill="#7b83eb"/><path d="M30 581h14.500v7a4.500 4.500 0 0 1-4.500 4.500h-5.500a4.500 4.500 0 0 1-4.500-4.500z" fill="#7b83eb"/><rect x="19.500" y="577.500" width="12.500" height="12.500" rx="1.500" fill="#4b53bc"/>
<path d="M24 621l2.500 3h9l2.500-3v8l-2 3 2 6h-3l-1-2h-6l-1 2h-3l2-6-2-3z" fill="#1b1b1b"/><rect x="26" y="626" width="3" height="2.200" fill="#fff"/><rect x="33" y="626" width="3" height="2.200" fill="#fff"/><path d="M27 632h8l1 5h-10z" fill="#5b2d8a"/><path d="M29.500 631h3l.8 4h-4.600z" fill="#d98a2b"/><rect x="24.500" y="637" width="3" height="2" fill="#7a3fb0"/><rect x="34.500" y="637" width="3" height="2" fill="#7a3fb0"/>
<g transform="translate(31.0,677.0)"><path d="M0 0L-9.53 -5.50A11 11 0 0 1 9.53 -5.50Z" fill="#ea4335"/><path d="M0 0L9.53 -5.50A11 11 0 0 1 0.00 11.00Z" fill="#fbbc05"/><path d="M0 0L0.00 11.00A11 11 0 0 1 -9.53 -5.50Z" fill="#34a853"/><circle r="5.06" fill="#fff"/><circle r="3.96" fill="#4285f4"/></g>
<path d="M20.500 918.500l-6 6 6 6" stroke="#fff" stroke-width="1.300" fill="none"/>
<rect x="13.500" y="944.500" width="11" height="7" rx="1" stroke="#fff" stroke-width="1.100" fill="none"/><rect x="15" y="946" width="8" height="4" fill="#fff"/><path d="M9.500 943v3M11.500 943v3M8.500 946h4v1.500a2 2 0 0 1-4 0zM10.500 949.500v2h3" stroke="#fff" stroke-width="1" fill="none"/>
<path d="M36 953.500a9 9 0 0 1 9-9M38.800 953.500a6.200 6.200 0 0 1 6.200-6.200M41.500 953.500a3.500 3.500 0 0 1 3.500-3.500" stroke="#fff" stroke-width="1.100" fill="none"/><circle cx="46.200" cy="953" r="1.500" fill="#fff"/>
<path d="M9 969.500h2.500l3.500-3v11l-3.500-3H9z" stroke="#fff" stroke-width="1.100" fill="none" stroke-linejoin="round"/><path d="M17.500 969a4 4 0 0 1 0 6M19.800 967a7 7 0 0 1 0 10M22 965.200a9.500 9.500 0 0 1 0 13.600" stroke="#fff" stroke-width="1" fill="none"/>
<rect x="0" y="1075" width="63" height="1" fill="#6a6a6a"/>
</svg>
<span class="t" style="left:26.03px;top:158.92px;font-size:19.00px;color:#fff;font-weight:bold;transform:skewX(-8deg);">µ</span>
<span class="t" style="left:22.34px;top:584.19px;font-size:11.00px;color:#fff;font-weight:bold;">T</span>
<span class="t" style="left:18.75px;top:1001.04px;font-size:12.00px;color:#fff;letter-spacing:-0.835px;">ENG</span>
<span class="t" style="left:17.25px;top:1038.44px;font-size:12.00px;color:#fff;letter-spacing:-0.506px;">14:23</span>
<span class="t" style="left:3.50px;top:1055.44px;font-size:12.00px;color:#fff;letter-spacing:-0.506px;">09.10.2020</span>
</nav>
</div>
</body>
</html>
